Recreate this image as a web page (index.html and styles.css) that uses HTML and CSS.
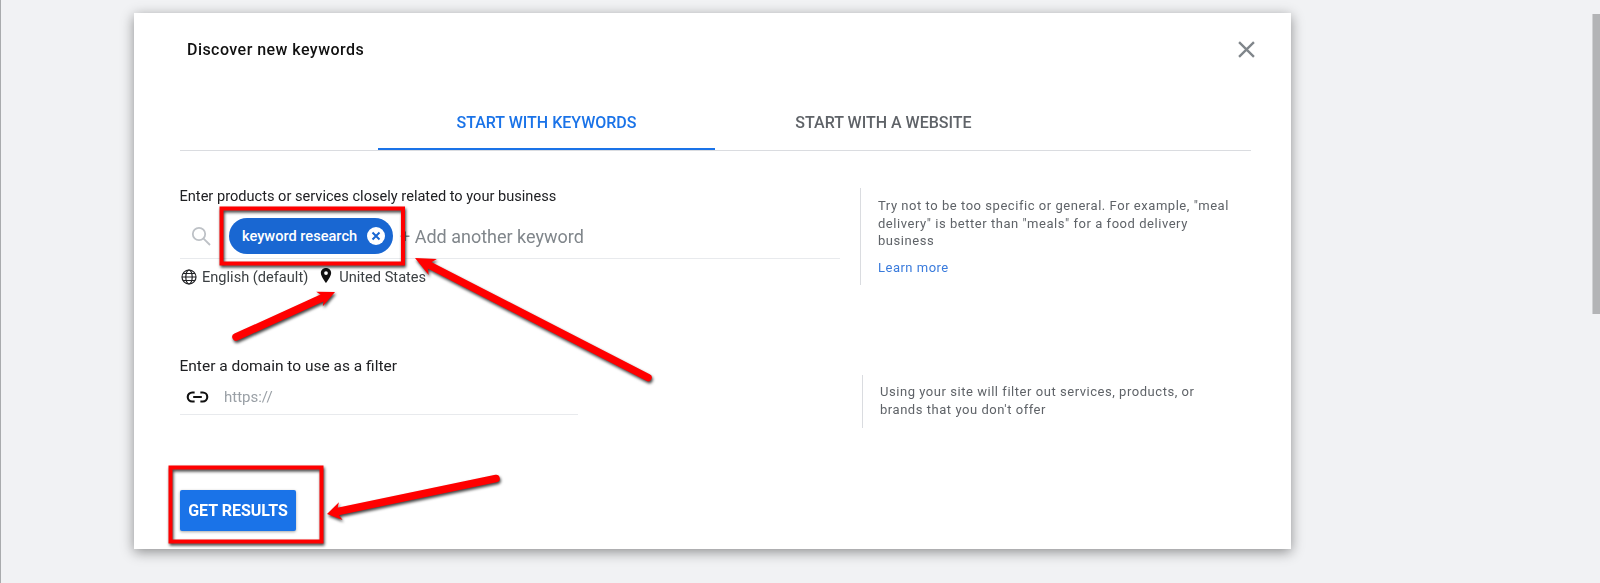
FILE: index.html
```html
<!DOCTYPE html>
<html lang="en">
<head>
<meta charset="utf-8">
<title>Discover new keywords</title>
<link rel="stylesheet" href="styles.css">
</head>
<body>
<div class="page">
  <section class="modal">
    <header class="modal-head">
      <h1 class="title">Discover new keywords</h1>
      <svg class="close" viewBox="0 0 16 16"><path d="M1 1L15 15M15 1L1 15"/></svg>
    </header>
    <nav class="tabs">
      <div class="tab tab-active">START WITH KEYWORDS</div>
      <div class="tab">START WITH A WEBSITE</div>
    </nav>
    <div class="block block-keywords">
      <div class="col">
        <div class="label">Enter products or services closely related to your business</div>
        <div class="field field-keywords">
          <svg class="search" viewBox="0 0 20 20"><circle cx="8" cy="8" r="6.2"/><path d="M12.6 12.6L19 19"/></svg>
          <div class="chip">
            <span>keyword research</span>
            <svg class="chip-x" viewBox="0 0 18 18"><circle cx="9" cy="9" r="9"/><path d="M5.5 5.5L12.500 12.500M12.500 5.500L5.500 12.500"/></svg>
          </div>
          <span class="placeholder"><span class="plus">+</span> Add another keyword</span>
        </div>
        <div class="meta">
          <svg class="globe" viewBox="0 0 16 16"><circle cx="8" cy="8" r="7"/><ellipse cx="8" cy="8" rx="3.2" ry="7"/><path d="M1 8H15M2 4.5H14M2 11.5H14"/></svg>
          <span class="meta-lang">English (default)</span>
          <svg class="pin" viewBox="0 0 12 16"><path fill-rule="evenodd" d="M6 0C2.7 0 .5 2.4.5 5.4.5 9.2 6 16 6 16s5.500-6.800 5.500-10.600C11.500 2.400 9.300 0 6 0zM6 7.400A2 2 0 1 1 6 3.400 2 2 0 0 1 6 7.400z"/></svg>
          <span>United States</span>
        </div>
      </div>
      <aside class="help help-keywords">
        <p class="help-text">Try not to be too specific or general. For example, "meal delivery" is better than "meals" for a food delivery business</p>
        <a class="help-link">Learn more</a>
      </aside>
    </div>
    <div class="block block-domain">
      <div class="col">
        <div class="label label-domain">Enter a domain to use as a filter</div>
        <div class="field field-domain">
          <svg class="link" viewBox="0 0 24 12"><path d="M9 1.300H6.500a4.700 4.700 0 0 0 0 9.400H9M15 1.300h2.500a4.700 4.700 0 0 1 0 9.400H15M7.500 6h9"/></svg>
          <span class="url">https://</span>
        </div>
      </div>
      <aside class="help help-domain">
        <p class="help-text">Using your site will filter out services, products, or brands that you don't offer</p>
      </aside>
    </div>
    <button class="submit">GET RESULTS</button>
  </section>
  <div class="scrollbar"></div>
</div>
<svg class="notes" viewBox="0 0 1600 583">
  <rect class="note-box" x="221.500" y="208.500" width="181.500" height="55"/>
  <rect class="note-box" x="170.500" y="467.500" width="151" height="74"/>
  <g class="arrow">
    <line x1="236" y1="337" x2="322" y2="298"/>
    <polygon points="335,292 322.800,306.300 324,297 316.200,291.700"/>
  </g>
  <g class="arrow">
    <line x1="648" y1="377.500" x2="428" y2="264.500"/>
    <polygon points="415,258 436.900,259.100 427.500,264.400 428.700,275.100"/>
  </g>
  <g class="arrow">
    <line x1="496" y1="478.500" x2="338" y2="511.500"/>
    <polygon points="327,514 338.900,502.300 336.800,512 342.500,519.900"/>
  </g>
</svg>
</body>
</html>
```
FILE: styles.css
```css
* { box-sizing: border-box; }
html, body { margin: 0; height: 583px; overflow: hidden; }
html { background: #f1f2f4; }
body {
  position: relative;
  font-family: Roboto, "Liberation Sans", sans-serif;
  color: #3c4043;
  filter: blur(.4px);
}
.page {
  display: flex;
  justify-content: space-between;
  align-items: flex-start;
  height: 583px;
  border-left: 1px solid #a9abad;
  padding-top: 13px;
}
.modal {
  width: 1157px;
  height: 536px;
  margin-left: 133px;
  padding: 27px 40px 18px 46px;
  background: #fff;
  box-shadow: 0 3px 12px rgba(0, 0, 0, .42);
}
.modal-head {
  display: flex;
  justify-content: space-between;
  align-items: center;
  height: 20px;
  padding-left: 7px;
}
.title { margin: 0; font-size: 16px; font-weight: 500; line-height: 20px; letter-spacing: .45px; color: #111; }
.close { width: 17px; height: 17px; margin-right: -4px; margin-top: -2px; }
.close path { fill: none; stroke: #80868b; stroke-width: 2.200; }
.tabs {
  display: flex;
  margin-top: 40px;
  padding-left: 198px;
  border-bottom: 1px solid #dadce0;
}
.tab {
  width: 337px;
  height: 50px;
  padding-top: 13px;
  font-size: 16px;
  font-weight: 500;
  line-height: 20px;
  text-align: center;
  color: #5f6368;
}
.tab-active { color: #1a73e8; border-bottom: 2px solid #1a73e8; }
.block { display: flex; }
.block-keywords { margin-top: 35px; }
.block-domain { margin-top: 69px; height: 72px; }
.col { width: 660px; flex: none; }
.label { margin-left: -.5px; font-size: 14.600px; line-height: 20px; color: #202124; }
.label-domain { font-size: 15.500px; }
.field { display: flex; align-items: center; border-bottom: 1px solid #e8eaed; }
.field-keywords { height: 53px; padding: 12px 0 4px 11px; }
.search { width: 20px; height: 20px; flex: none; margin-top: -1px; }
.search circle, .search path { fill: none; stroke: #bdc1c6; stroke-width: 1.800; }
.chip {
  display: flex;
  align-items: center;
  justify-content: space-between;
  width: 164px;
  height: 36px;
  margin-left: 18px;
  padding: 0 8px 0 13px;
  border-radius: 18px;
  background: #1967d2;
  color: #fff;
  font-size: 14.600px;
  font-weight: 500;
  flex: none;
}
.chip-x { width: 18px; height: 18px; flex: none; }
.chip-x circle { fill: #fff; }
.chip-x path { fill: none; stroke: #1967d2; stroke-width: 2; }
.placeholder { margin-left: 7px; font-size: 18px; color: #80868b; white-space: nowrap; }
.meta { display: flex; align-items: center; height: 20px; margin-top: 8px; padding-left: 1px; font-size: 14.600px; line-height: 20px; }
.globe { width: 16px; height: 16px; flex: none; }
.globe circle, .globe ellipse, .globe path { fill: none; stroke: #202124; stroke-width: 1.200; }
.meta-lang { margin-left: 5px; }
.pin { width: 12px; height: 15px; margin: -4px 7px 0 12px; flex: none; fill: #111; }
.help { flex: none; border-left: 1px solid #dadce0; }
.help-text { margin: 0; font-size: 13px; color: #5f6368; letter-spacing: .54px; }
.help-keywords { width: 375px; height: 97px; margin: 2px 0 0 20px; padding: 9px 0 0 17px; }
.help-keywords .help-text { line-height: 17.500px; }
.help-link { display: block; margin-top: 9px; font-size: 13px; line-height: 18px; letter-spacing: .5px; color: #3a7bdc; }
.help-domain { width: 345px; height: 53px; margin: 19px 0 0 22px; padding: 8px 0 0 17px; }
.help-domain .help-text { line-height: 18px; }
.field-domain { width: 398px; height: 39px; padding: 3px 0 0 6px; }
.link { width: 23px; height: 12px; flex: none; }
.link path { fill: none; stroke: #111; stroke-width: 2.200; }
.url { margin-left: 15px; font-size: 15px; color: #9aa0a6; }
.submit {
  display: block;
  width: 116px;
  height: 41px;
  margin: 62px 0 0;
  padding: 0;
  border: 0;
  border-radius: 2px;
  background: #1a73e8;
  color: #fff;
  font-family: inherit;
  font-size: 16px;
  font-weight: 700;
  box-shadow: 0 1px 3px rgba(0, 0, 0, .35);
}
.scrollbar { width: 8px; height: 300px; margin-top: 1px; background: #b3b4b6; border-left: 1px solid #d0d1d3; }
.notes { position: absolute; left: 0; top: 0; width: 1600px; height: 583px; pointer-events: none; }
.note-box { fill: none; stroke: #f00; stroke-width: 4px; filter: drop-shadow(1px 2px 1.500px rgba(0, 0, 0, .75)); }
.arrow { filter: drop-shadow(1px 2px 1.500px rgba(0, 0, 0, .75)); }
.arrow line { stroke: #f00; stroke-width: 7.500px; stroke-linecap: round; }
.arrow polygon { fill: #f00; }
```
